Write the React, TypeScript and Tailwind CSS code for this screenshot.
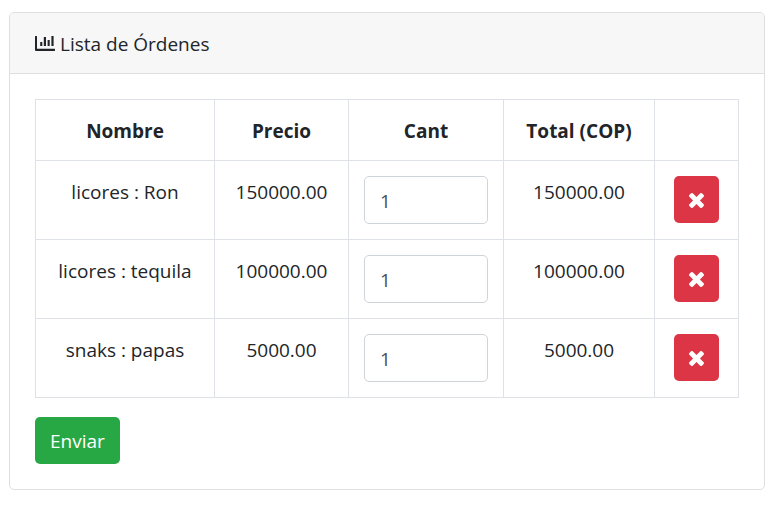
import { useState } from "react";

type Order = { name: string; price: number; quantity: number };

const initialOrders: Order[] = [
  { name: "licores : Ron", price: 150000, quantity: 1 },
  { name: "licores : tequila", price: 100000, quantity: 1 },
  { name: "snaks : papas", price: 5000, quantity: 1 },
];

const cell = "border border-[#dee2e6] p-[15px]";
const textCell = "border border-[#dee2e6] px-[15px] pt-4 pb-[14px]";

function ChartIcon() {
  return (
    <svg viewBox="0 0 20 16" className="h-4 w-5" fill="currentColor" aria-hidden="true">
      <path d="M0.5 0H2V12.7H19.6Q20 12.7 20 13.1V14.6Q20 15 19.6 15H1Q0 15 0 14V0.5Q0 0 0.5 0Z" />
      <path d="M5.2 6H7.3V10H5.2ZM8.8 1H11V10H8.8ZM12.6 4H14.7V10H12.6ZM16.4 0H18.6V10H16.4Z" />
    </svg>
  );
}

function CloseIcon() {
  return (
    <svg viewBox="110 -18 1188 1188" className="size-[15px]" fill="currentColor" aria-hidden="true">
      <path d="M1298 214q0 40 -28 68l-294 294l294 294q28 28 28 68t-28 68l-136 136q-28 28 -68 28t-68 -28l-294 -294l-294 294q-28 28 -68 28t-68 -28l-136 -136q-28 -28 -28 -68t28 -68l294 -294l-294 -294q-28 -28 -28 -68t28 -68l136 -136q28 -28 68 -28t68 28l294 294l294 -294q28 -28 68 -28t68 28l136 136q28 28 28 68z" />
    </svg>
  );
}

export default function App() {
  const [orders, setOrders] = useState(initialOrders);

  const setQuantity = (index: number, quantity: number) =>
    setOrders(orders.map((o, i) => (i === index ? { ...o, quantity } : o)));

  return (
    <main className="bg-white pt-3 pr-3 pb-8 pl-[9px] font-['Open_Sans','Noto_Sans',sans-serif] text-[19px] leading-[30px] text-[#212529]">
      <section className="rounded-[5px] border border-[#dfdfdf]">
        <header className="flex items-center gap-[5px] rounded-t-[4px] border-b border-[#dfdfdf] bg-[#f7f7f7] px-[25px] pt-4 pb-[14px]">
          <ChartIcon />
          <h1>Lista de Órdenes</h1>
        </header>
        <form className="p-[25px]" onSubmit={(e) => e.preventDefault()}>
          <table className="mb-[19px] w-full table-fixed border-collapse text-center">
            <colgroup>
              <col className="w-[179px]" />
              <col className="w-[134px]" />
              <col className="w-[155px]" />
              <col className="w-[151px]" />
              <col className="w-[84px]" />
            </colgroup>
            <thead>
              <tr>
                <th className={textCell}>Nombre</th>
                <th className={textCell}>Precio</th>
                <th className={textCell}>Cant</th>
                <th className={textCell}>Total (COP)</th>
                <td className={textCell}></td>
              </tr>
            </thead>
            <tbody>
              {orders.map((order, i) => (
                <tr key={order.name} className="align-top">
                  <td className={textCell}>{order.name}</td>
                  <td className={textCell}>{order.price.toFixed(2)}</td>
                  <td className={cell}>
                    <input
                      type="number"
                      min={1}
                      aria-label={`Cantidad de ${order.name}`}
                      value={order.quantity}
                      onChange={(e) => setQuantity(i, Number(e.target.value))}
                      className="block h-12 w-full rounded-[5px] border border-[#ced4da] bg-white px-[15px] pt-[2px] text-[#495057]"
                    />
                  </td>
                  <td className={textCell}>{(order.price * order.quantity).toFixed(2)}</td>
                  <td className={cell}>
                    <button
                      type="button"
                      aria-label={`Eliminar ${order.name}`}
                      onClick={() => setOrders(orders.filter((_, j) => j !== i))}
                      className="mx-auto flex h-[47px] w-[45px] items-center justify-center rounded-[5px] bg-[#dc3545] pt-[2px] text-white"
                    >
                      <CloseIcon />
                    </button>
                  </td>
                </tr>
              ))}
            </tbody>
          </table>
          <button type="submit" className="block h-[47px] rounded-[5px] bg-[#28a745] px-[15px] text-white">
            Enviar
          </button>
        </form>
      </section>
    </main>
  );
}
